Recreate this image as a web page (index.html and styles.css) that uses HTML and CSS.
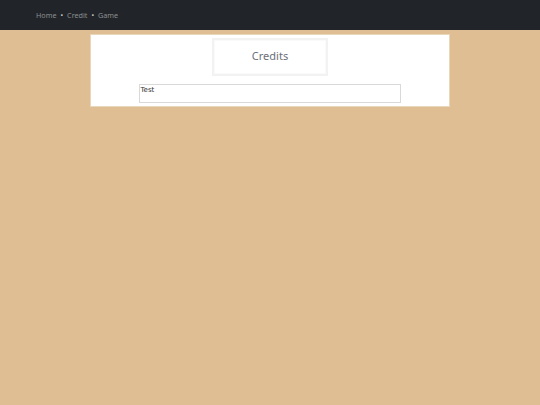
FILE: index.html
```html
<!DOCTYPE html>
<html>
<head>
<meta charset="utf-8">
<link rel="stylesheet" href="styles.css">
</head>
<body>
<nav class="navbar">
  <a class="nav-link" href="#">Home</a>
  <span class="sep">•</span>
  <a class="nav-link" href="#">Credit</a>
  <span class="sep">•</span>
  <a class="nav-link" href="#">Game</a>
</nav>
<main class="card">
  <div class="title-box">Credits</div>
  <div class="text-box">Test</div>
</main>
</body>
</html>
```
FILE: styles.css
```css
html, body {
  margin: 0;
  padding: 0;
}
body {
  background: #dfbe93;
  font-family: "Noto Sans", "DejaVu Sans", sans-serif;
  height: 405px;
}
.navbar {
  background: #212529;
  height: 30px;
  display: flex;
  align-items: center;
  padding-left: 36px;
  gap: 4px;
  font-size: 7.2px;
  color: #8c8e90;
}
.nav-link {
  color: #8c8e90;
  text-decoration: none;
}
.sep {
  color: #c8c9ca;
  font-size: 7px;
}
.card {
  background: #fff;
  width: 358px;
  margin: 4px 0 0 90px;
  border: 1px solid #e8d6bd;
  padding: 3px 0 3px 0;
  display: flex;
  flex-direction: column;
  align-items: center;
}
.title-box {
  width: 116px;
  height: 38px;
  border: 2px solid #f2f2f2;
  box-shadow: inset 0 0 0 1px #fafafa;
  box-sizing: border-box;
  display: flex;
  align-items: center;
  justify-content: center;
  padding-bottom: 4px;
  font-size: 11px;
  color: #6c6f78;
}
.text-box {
  margin-top: 8px;
  width: 262px;
  height: 19px;
  box-sizing: border-box;
  border: 1px solid #d9d9d9;
  font-family: "DejaVu Sans", sans-serif;
  font-size: 7px;
  color: #333;
  padding: 1px 0 0 1px;
  margin-left: -1px;
}
```
